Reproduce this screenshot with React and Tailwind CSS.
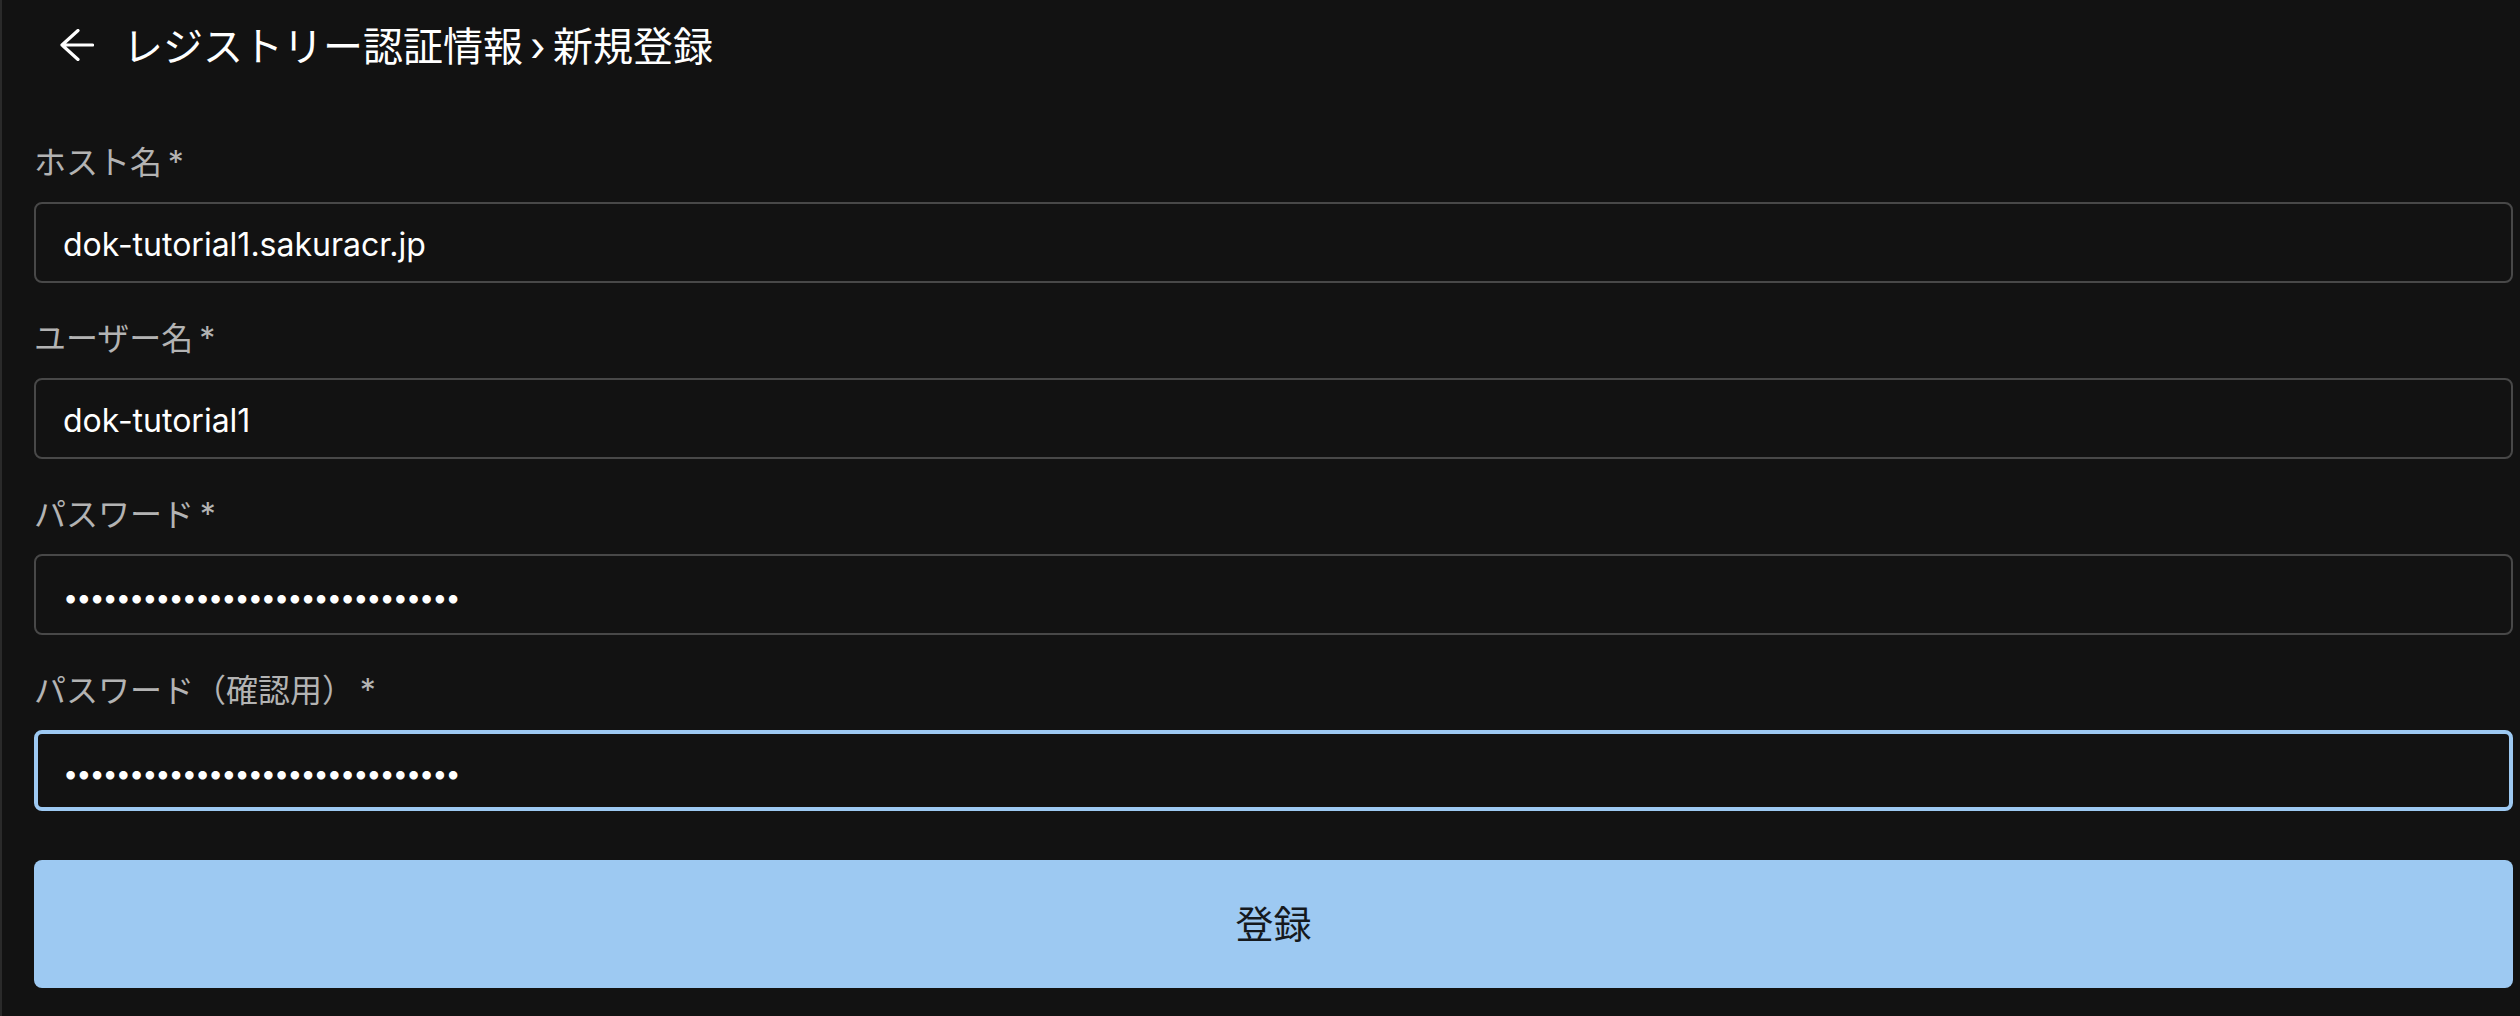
import { useState } from "react";

const font = "font-['Inter','Noto_Sans_CJK_JP',sans-serif]";

function BackArrow() {
  return (
    <svg width="34" height="32" viewBox="0 0 34 32" fill="none" aria-hidden="true">
      <path
        d="M18 1.5L2 16l16 14.5M2 16h30.5"
        stroke="white"
        strokeWidth="3.2"
        strokeLinecap="round"
        strokeLinejoin="round"
      />
    </svg>
  );
}

function Field({ label, value, secret, focused }) {
  const border = focused
    ? "border-[4px] border-[#9dc9f2] pl-[25px]"
    : "border-2 border-[#484848] pl-[27px]";

  return (
    <div className="flex flex-col">
      <label className="h-[40px] leading-[40px] text-[32px] text-[#b3b3b3] mb-[19px]">
        {label}
        {"\u2009*"}
      </label>
      <div className={`h-[81px] rounded-[8px] flex items-center pt-[4px] ${border}`}>
        {secret ? (
          <span className="text-[27px] text-white tracking-[-2px] leading-none pt-[2px]">
            {"•".repeat(value.length)}
          </span>
        ) : (
          <span className="text-[32px] text-white leading-none">{value}</span>
        )}
      </div>
    </div>
  );
}

export default function App() {
  const [password] = useState("abcdefghijklmnopqrstuvwxyz0123");

  return (
    <div className={`min-h-screen bg-[#121212] border-l-2 border-[#2a2a2a] ${font}`}>
      <header className="h-[92px] flex items-center pl-[58px] pt-[2px]">
        <button aria-label="戻る" className="flex items-center mt-[-5px]">
          <BackArrow />
        </button>
        <h1 className="ml-[29px] text-[40px] text-white font-normal leading-none">
          レジストリー認証情報{"\u2009›\u2009"}新規登録
        </h1>
      </header>

      <form className="pl-[32px] pr-[7px] pt-[51px] flex flex-col gap-[36px]">
        <Field label="ホスト名" value="dok-tutorial1.sakuracr.jp" />
        <Field label="ユーザー名" value="dok-tutorial1" />
        <Field label="パスワード" value={password} secret />
        <Field label="パスワード（確認用）" value={password} secret focused />
      </form>

      <div className="pl-[32px] pr-[7px] pt-[49px]">
        <button
          type="button"
          className="w-full h-[128px] rounded-[8px] bg-[#9dc9f2] text-[#15191e] text-[38px] leading-none"
        >
          登録
        </button>
      </div>
    </div>
  );
}
